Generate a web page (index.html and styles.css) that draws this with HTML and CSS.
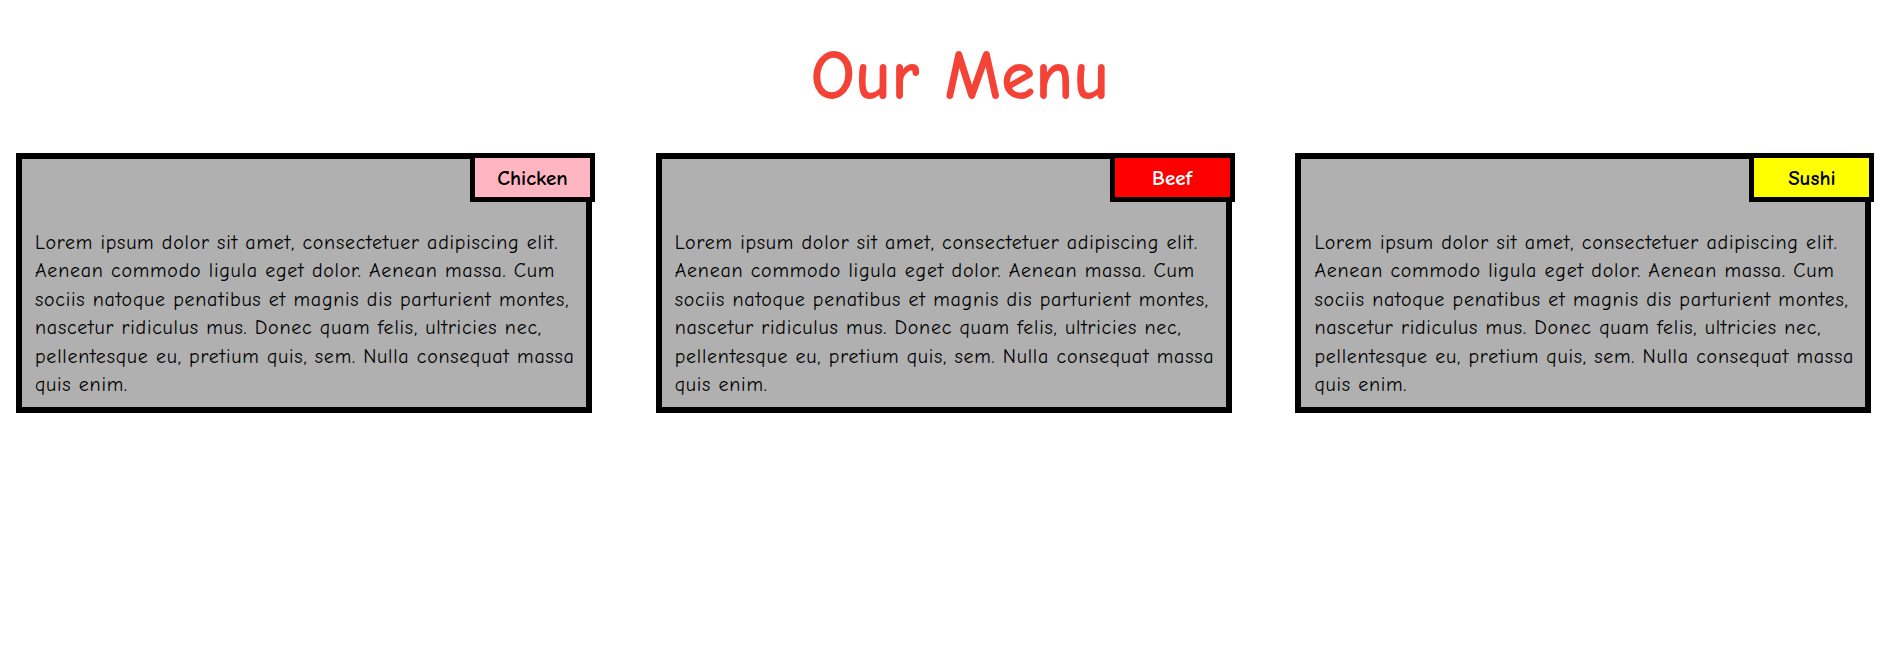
FILE: index.html
```html
<!DOCTYPE html>
<html lang="en">
<head>
<meta charset="utf-8">
<title>Our Menu</title>
<link rel="stylesheet" href="styles.css">
</head>
<body>
  <h1 class="title">Our Menu</h1>
  <main class="menu">
    <article class="card">
      <span class="tag tag-chicken">Chicken</span>
      <p class="card-text">Lorem ipsum dolor sit amet, consectetuer adipiscing elit. Aenean commodo ligula eget dolor. Aenean massa. Cum sociis natoque penatibus et magnis dis parturient montes, nascetur ridiculus mus. Donec quam felis, ultricies nec, pellentesque eu, pretium quis, sem. Nulla consequat massa quis enim.</p>
    </article>
    <article class="card">
      <span class="tag tag-beef">Beef</span>
      <p class="card-text">Lorem ipsum dolor sit amet, consectetuer adipiscing elit. Aenean commodo ligula eget dolor. Aenean massa. Cum sociis natoque penatibus et magnis dis parturient montes, nascetur ridiculus mus. Donec quam felis, ultricies nec, pellentesque eu, pretium quis, sem. Nulla consequat massa quis enim.</p>
    </article>
    <article class="card">
      <span class="tag tag-sushi">Sushi</span>
      <p class="card-text">Lorem ipsum dolor sit amet, consectetuer adipiscing elit. Aenean commodo ligula eget dolor. Aenean massa. Cum sociis natoque penatibus et magnis dis parturient montes, nascetur ridiculus mus. Donec quam felis, ultricies nec, pellentesque eu, pretium quis, sem. Nulla consequat massa quis enim.</p>
    </article>
  </main>
</body>
</html>
```
FILE: styles.css
```css
* {
  box-sizing: border-box;
}

body {
  margin: 0;
  background: #ffffff;
  color: #000000;
  font-family: "Comic Neue", "Comic Sans MS", cursive, sans-serif;
}

.title {
  margin: 0;
  padding: 37px 0 0 20px;
  height: 153px;
  text-align: center;
  font-size: 70px;
  font-weight: 700;
  line-height: 80px;
  color: #f44336;
}

.menu {
  display: flex;
  gap: 63.7px;
  padding: 0 16px;
}

.card {
  position: relative;
  flex: 0 0 576px;
  height: 260px;
  padding: 70px 5px 8px 13px;
  border: 6px solid #000000;
  background: #b0b0b0;
}

.tag {
  position: absolute;
  top: -6px;
  right: -9px;
  width: 125px;
  height: 49px;
  display: flex;
  align-items: center;
  justify-content: center;
  border: 5px solid #000000;
  font-size: 21px;
  font-weight: 700;
}

.tag-chicken {
  background: #ffb6c1;
  color: #000000;
}

.tag-beef {
  background: #ff0000;
  color: #ffffff;
}

.tag-sushi {
  background: #ffff00;
  color: #000000;
}

.card-text {
  margin: 0;
  font-size: 20px;
  line-height: 28.4px;
  letter-spacing: 0.75px;
}
```
